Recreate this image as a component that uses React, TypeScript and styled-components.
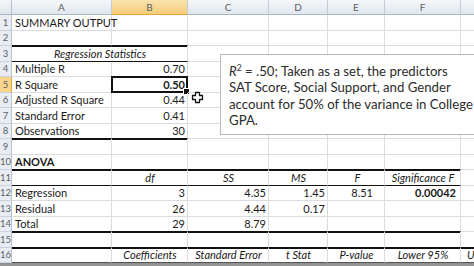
import React from "react";
import styled, { createGlobalStyle, css } from "styled-components";

const GlobalStyle = createGlobalStyle`
  html, body { margin: 0; padding: 0; background: #ffffff; overflow: hidden; }
  body { font-family: Lato, "Liberation Sans", sans-serif; }
`;

const GRID = "#dadcdf";
const COLS = [12, 100, 76, 81, 59, 57, 76, 76];

const Page = styled.div`
  position: relative;
  width: 474px;
  height: 266px;
  overflow: hidden;
  background: #ffffff;
`;

const Sheet = styled.div`
  display: grid;
  grid-template-columns: ${COLS.map((c) => c + "px").join(" ")};
  grid-template-rows: 15px repeat(16, 15.5px) 10px;
  font-family: Lato, "Liberation Sans", sans-serif;
  font-size: 11px;
  color: #1a1a1a;
`;

const Corner = styled.div`
  background: linear-gradient(#f4f6f9, #dfe4ea);
  border-right: 1px solid #b9c3cf;
  border-bottom: 1px solid #a9b6c5;
  box-sizing: border-box;
`;

const ColHeader = styled.div<{ $selected?: boolean }>`
  box-sizing: border-box;
  display: flex;
  align-items: center;
  justify-content: center;
  font-size: 10px;
  color: #5a5f66;
  border-right: 1px solid #c3ccd8;
  border-bottom: 1px solid ${(p) => (p.$selected ? "#e8a33a" : "#a9b6c5")};
  background: ${(p) =>
    p.$selected
      ? "linear-gradient(#fbe3ad, #f5cd78)"
      : "linear-gradient(#f5f7fa, #e1e6ed)"};
`;

const RowHeader = styled.div<{ $selected?: boolean }>`
  box-sizing: border-box;
  display: flex;
  align-items: center;
  justify-content: center;
  font-size: 9.5px;
  color: #5a5f66;
  border-right: 1px solid ${(p) => (p.$selected ? "#e8a33a" : "#b9c3cf")};
  border-bottom: 1px solid #c9d1dc;
  background: ${(p) => (p.$selected ? "#f7d68c" : "#e9edf3")};
  overflow: visible;
  white-space: nowrap;
`;

type Edge = "thin" | "thick" | "gray" | undefined;

const Cell = styled.div<{
  $align?: "left" | "right" | "center";
  $bold?: boolean;
  $italic?: boolean;
  $bottom?: Edge;
  $span?: number;
  $pr?: number;
  $pl?: number;
}>`
  position: relative;
  box-sizing: border-box;
  display: flex;
  align-items: center;
  white-space: nowrap;
  overflow: visible;
  padding: 0 ${(p) => p.$pr ?? 2}px 0 ${(p) => p.$pl ?? 3}px;
  justify-content: ${(p) =>
    p.$align === "right" ? "flex-end" : p.$align === "center" ? "center" : "flex-start"};
  font-weight: ${(p) => (p.$bold ? 700 : 400)};
  font-style: ${(p) => (p.$italic ? "italic" : "normal")};
  grid-column: span ${(p) => p.$span ?? 1};
  border-right: 1px solid ${GRID};
  ${(p) =>
    p.$bottom === "thick"
      ? css`
          border-bottom: 1px solid #111;
          box-shadow: 0 1px 0 #111;
        `
      : p.$bottom === "thin"
      ? css`
          border-bottom: 1px solid #111;
        `
      : p.$bottom === "gray"
      ? css`
          border-bottom: 1px solid #555;
        `
      : css`
          border-bottom: 1px solid ${GRID};
        `}
`;

const ActiveFrame = styled.span`
  position: absolute;
  left: -1px;
  top: -1px;
  right: -1px;
  bottom: -1px;
  border: 2px solid #111;
  pointer-events: none;
`;

const FillHandle = styled.span`
  position: absolute;
  right: -4px;
  bottom: -4px;
  width: 5px;
  height: 5px;
  background: #111;
  border: 1px solid #fff;
`;

const BottomBand = styled.div`
  grid-column: 1 / -1;
  background: linear-gradient(#8d8d8d, #b5b5b5);
`;

const Callout = styled.div`
  position: absolute;
  left: 220px;
  top: 54px;
  width: 270px;
  height: 81px;
  box-sizing: border-box;
  background: #ffffff;
  border: 1px solid #b8b8b8;
  padding: 8px 0 0 8px;
  font-family: Lato, "Liberation Sans", sans-serif;
  font-size: 13.2px;
  line-height: 16.3px;
  color: #2b2b2b;
`;

const CalloutLine = styled.div`
  white-space: nowrap;
`;

const Sup = styled.sup`
  font-size: 8.5px;
  line-height: 0;
  vertical-align: 5px;
`;

const Cursor = styled.svg`
  position: absolute;
  left: 191px;
  top: 91px;
  width: 13px;
  height: 13px;
`;

type CellDef = {
  t?: string;
  a?: "left" | "right" | "center";
  b?: boolean;
  i?: boolean;
  bb?: Edge;
  span?: number;
  pr?: number;
  pl?: number;
  active?: boolean;
};

const thickAF: CellDef = { bb: "thick" };

const rows: CellDef[][] = [
  [{ t: "SUMMARY OUTPUT" }, {}, {}, {}, {}, {}, {}],
  [{ bb: "thick" }, { bb: "thick" }, {}, {}, {}, {}, {}],
  [{ t: "Regression Statistics", i: true, a: "center", span: 2, bb: "thin" }, {}, {}, {}, {}, {}],
  [{ t: "Multiple R" }, { t: "0.70", a: "right" }, {}, {}, {}, {}, {}],
  [{ t: "R Square" }, { t: "0.50", a: "right", b: true, active: true }, {}, {}, {}, {}, {}],
  [{ t: "Adjusted R Square" }, { t: "0.44", a: "right" }, {}, {}, {}, {}, {}],
  [{ t: "Standard Error" }, { t: "0.41", a: "right" }, {}, {}, {}, {}, {}],
  [{ t: "Observations", bb: "thick" }, { t: "30", a: "right", bb: "thick" }, {}, {}, {}, {}, {}],
  [{}, {}, {}, {}, {}, {}, {}],
  [
    { t: "ANOVA", b: true, bb: "thick" },
    thickAF, thickAF, thickAF, thickAF, thickAF,
    {},
  ],
  [
    { bb: "thin" },
    { t: "df", i: true, a: "center", bb: "thin" },
    { t: "SS", i: true, a: "center", bb: "thin" },
    { t: "MS", i: true, a: "center", bb: "thin" },
    { t: "F", i: true, a: "center", bb: "thin", pr: 0 },
    { t: "Significance F", i: true, a: "center", bb: "thin" },
    {},
  ],
  [
    { t: "Regression" },
    { t: "3", a: "right" },
    { t: "4.35", a: "right" },
    { t: "1.45", a: "right" },
    { t: "8.51", a: "right", pr: 11 },
    { t: "0.00042", a: "right", b: true, pr: 4 },
    {},
  ],
  [
    { t: "Residual" },
    { t: "26", a: "right" },
    { t: "4.44", a: "right" },
    { t: "0.17", a: "right" },
    {}, {}, {},
  ],
  [
    { t: "Total", bb: "thick" },
    { t: "29", a: "right", bb: "thick" },
    { t: "8.79", a: "right", bb: "thick" },
    thickAF, thickAF, thickAF,
    {},
  ],
  [thickAF, thickAF, thickAF, thickAF, thickAF, thickAF, thickAF],
  [
    { bb: "gray" },
    { t: "Coefficients", i: true, a: "center", bb: "gray" },
    { t: "Standard Error", i: true, a: "center", bb: "gray" },
    { t: "t Stat", i: true, a: "center", bb: "gray" },
    { t: "P-value", i: true, a: "center", bb: "gray" },
    { t: "Lower 95%", i: true, a: "center", bb: "gray" },
    { t: "Upper 95%", i: true, a: "left", pl: 6, bb: "gray" },
  ],
];

const letters = ["A", "B", "C", "D", "E", "F", "G"];

export default function App() {
  return (
    <Page>
      <GlobalStyle />
      <Sheet>
        <Corner />
        {letters.map((l) => (
          <ColHeader key={l} $selected={l === "B"}>
            {l}
          </ColHeader>
        ))}
        {rows.map((row, ri) => (
          <React.Fragment key={ri}>
            <RowHeader $selected={ri === 4}>{ri + 1}</RowHeader>
            {row.map((c, ci) => (
              <Cell
                key={ci}
                $align={c.a}
                $bold={c.b}
                $italic={c.i}
                $bottom={c.bb}
                $span={c.span}
                $pr={c.pr}
                $pl={c.pl}
              >
                {c.t}
                {c.active && (
                  <ActiveFrame>
                    <FillHandle />
                  </ActiveFrame>
                )}
              </Cell>
            ))}
          </React.Fragment>
        ))}
        <BottomBand />
      </Sheet>
      <Callout>
        <CalloutLine>
          <i>R</i>
          <Sup>2</Sup> = .50; Taken as a set, the predictors
        </CalloutLine>
        <CalloutLine>SAT Score, Social Support, and Gender</CalloutLine>
        <CalloutLine>account for 50% of the variance in College</CalloutLine>
        <CalloutLine>GPA.</CalloutLine>
      </Callout>
      <Cursor viewBox="0 0 13 13">
        <path
          d="M4.5 1.5 h4 v3 h3 v4 h-3 v3 h-4 v-3 h-3 v-4 h3 z"
          fill="#ffffff"
          stroke="#111"
          strokeWidth="1.3"
          strokeLinejoin="round"
        />
      </Cursor>
    </Page>
  );
}
